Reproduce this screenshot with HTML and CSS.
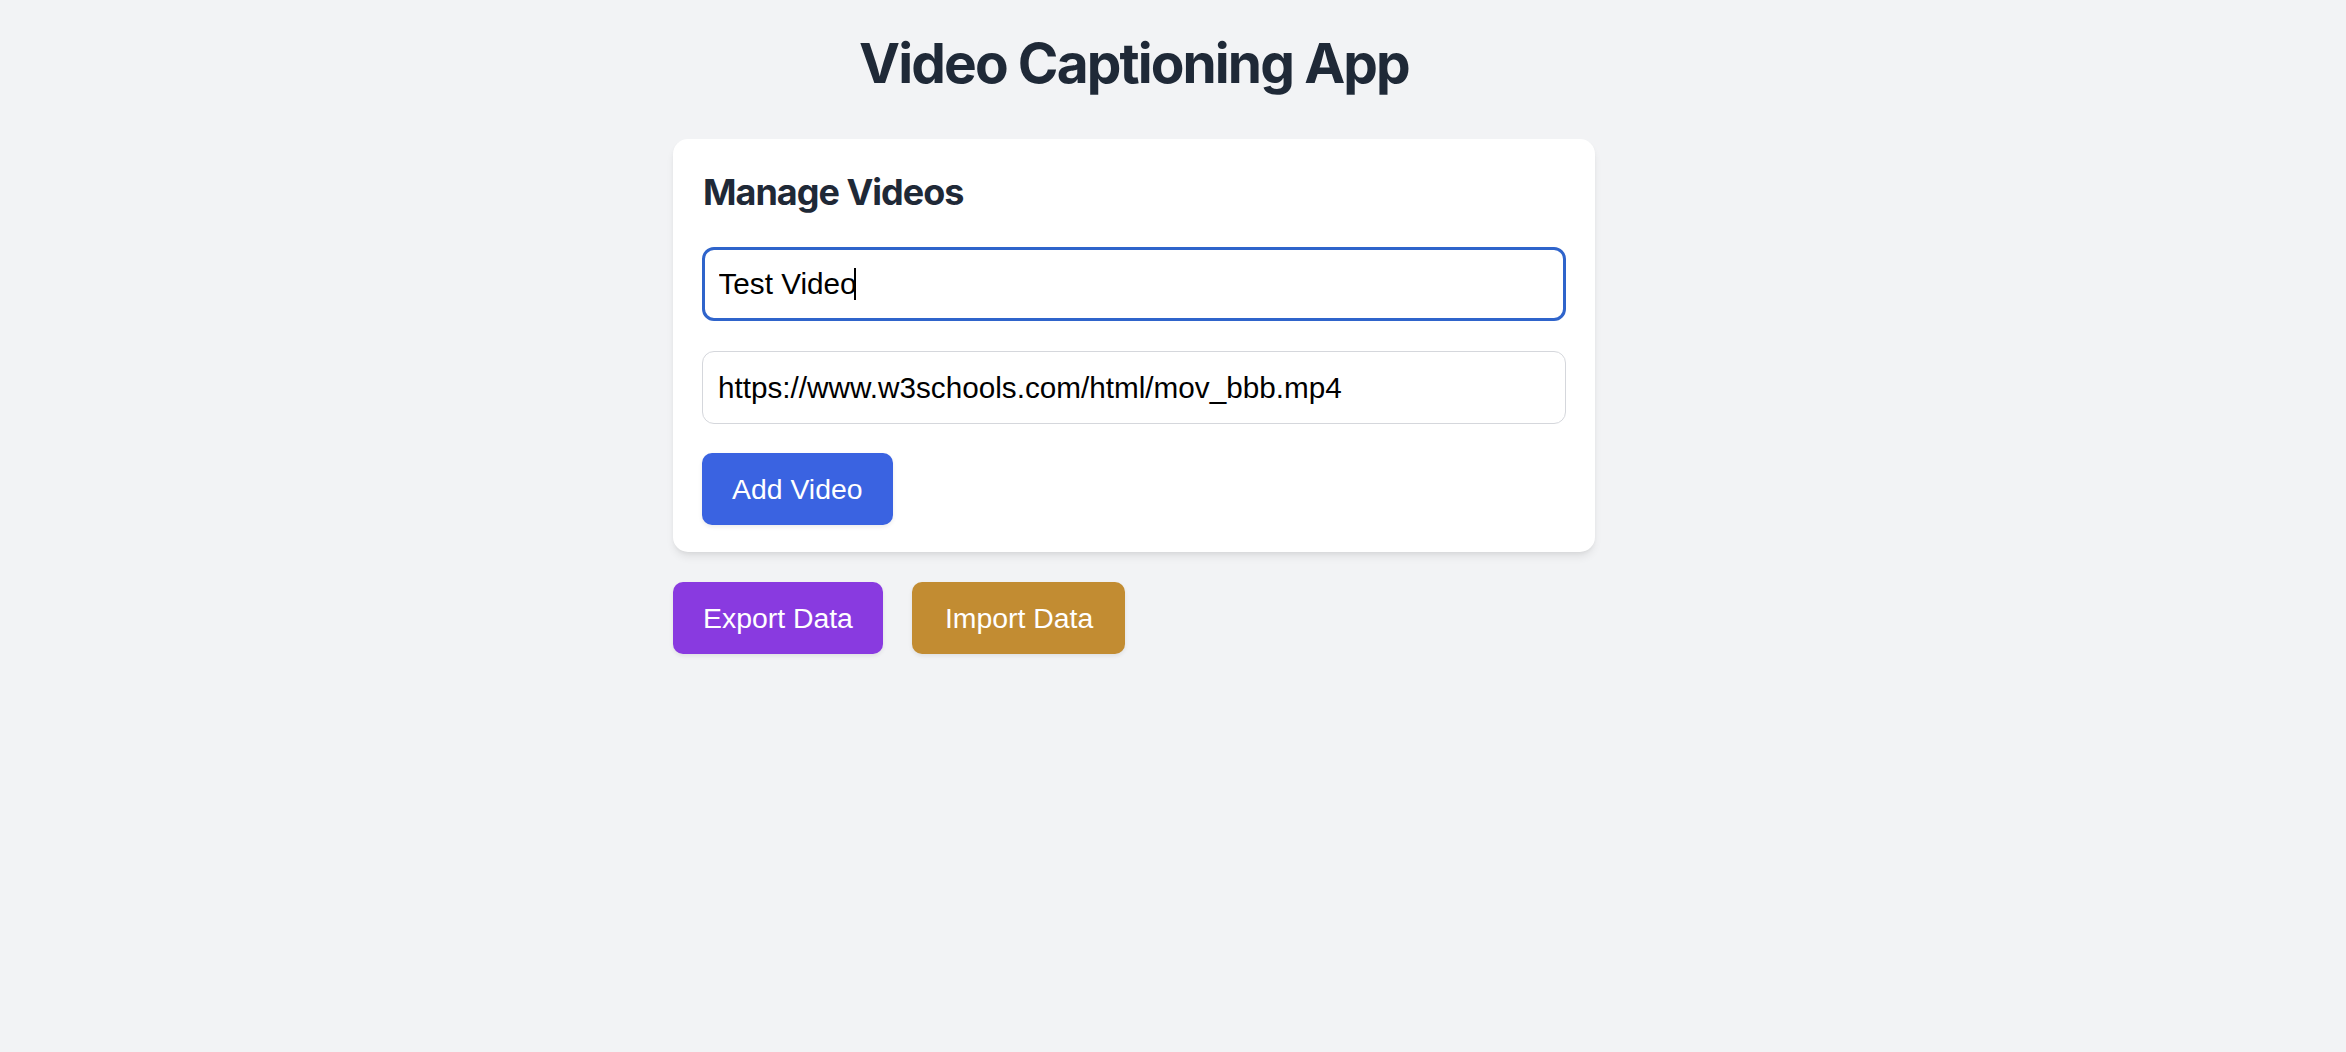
FILE: index.html
```html
<!DOCTYPE html>
<html lang="en">
<head>
<meta charset="utf-8">
<title>Video Captioning App</title>
<link rel="stylesheet" href="styles.css">
</head>
<body>
<div class="page">
  <h1 class="app-title">Video Captioning App</h1>
  <section class="card">
    <h2 class="card-title">Manage Videos</h2>
    <div class="field-wrap">
      <input class="field field-focus" type="text" value="Test Video">
      <span class="caret"></span>
    </div>
    <input class="field" type="text" value="https://www.w3schools.com/html/mov_bbb.mp4">
    <button class="btn btn-blue" type="button">Add Video</button>
  </section>
  <div class="actions">
    <button class="btn btn-purple" type="button">Export Data</button>
    <button class="btn btn-gold" type="button">Import Data</button>
  </div>
</div>
</body>
</html>
```

FILE: styles.css
```css
* {
  box-sizing: border-box;
}

html,
body {
  margin: 0;
  padding: 0;
  background: #f2f3f5;
}

body {
  min-height: 1052px;
  padding-right: 78px;
  font-family: "Liberation Sans", Arial, sans-serif;
}

.page {
  width: 922px;
  margin: 0 auto;
  padding-top: 30px;
}

.app-title {
  margin: 0 0 43px;
  font-family: Inter, "Liberation Sans", sans-serif;
  font-weight: 700;
  font-size: 55px;
  line-height: 66px;
  text-align: center;
  color: #1f2937;
  letter-spacing: -1.9px;
}

.card {
  display: flex;
  flex-direction: column;
  align-items: flex-start;
  background: #ffffff;
  border-radius: 15px;
  padding: 30px 29px 27px;
  box-shadow: 0 6px 10px -2px rgba(0, 0, 0, 0.09), 0 2px 5px -2px rgba(0, 0, 0, 0.08);
}

.card-title {
  margin: 0 0 31px 1px;
  font-family: Inter, "Liberation Sans", sans-serif;
  font-weight: 700;
  font-size: 36px;
  line-height: 47px;
  color: #1f2937;
  letter-spacing: -1px;
}

.field-wrap {
  position: relative;
  width: 100%;
  margin: 0 0 30px;
}

.field {
  display: block;
  width: 100%;
  height: 73px;
  margin: 0 0 29px;
  padding: 0 15px;
  border: 1.5px solid #d5d7dc;
  border-radius: 12px;
  background: #ffffff;
  font-family: "Liberation Sans", Arial, sans-serif;
  font-size: 29.7px;
  color: #000000;
  outline: none;
}

.field-focus {
  height: 74px;
  margin: 0;
  border: 3px solid #2f64cb;
  padding: 0 13.5px;
}

.caret {
  position: absolute;
  left: 152px;
  top: 21px;
  width: 2px;
  height: 32px;
  background: #000000;
}

.btn {
  height: 72px;
  padding: 0 30px;
  border: none;
  border-radius: 10px;
  font-family: "Liberation Sans", Arial, sans-serif;
  font-size: 28.4px;
  color: #ffffff;
  cursor: pointer;
  box-shadow: 0 2px 4px rgba(0, 0, 0, 0.08);
}

.btn-blue {
  background: #3a63e1;
}

.btn-purple {
  background: #893ae0;
}

.btn-gold {
  background: #c28c32;
  padding: 0 32px 0 33px;
}

.actions {
  display: flex;
  gap: 29px;
  margin-top: 30px;
}
```
